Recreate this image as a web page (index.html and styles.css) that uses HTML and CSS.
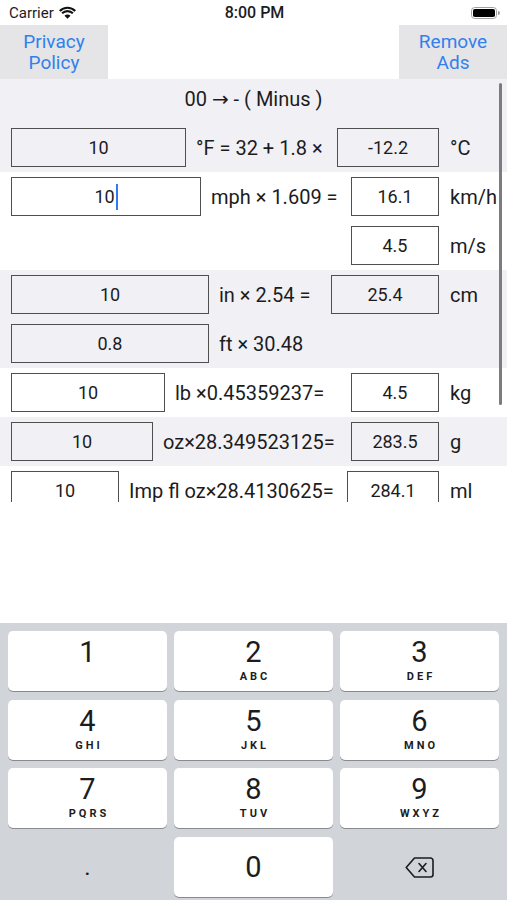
FILE: index.html
```html
<!DOCTYPE html>
<html lang="en">
<head>
  <meta charset="UTF-8" />
  <meta name="viewport" content="width=device-width, initial-scale=1.0" />
  <title>Unit Converter</title>
  <link rel="stylesheet" href="styles.css">
</head>
<body>
  <div id="statusBar">
    <div class="carrier">
      Carrier
      <svg class="wifi" viewBox="-1 0 20 14" width="19" height="14">
        <path d="M9 13 L5.82 9.82 A4.5 4.5 0 0 1 12.18 9.82 Z" fill="#111" />
        <path d="M3.34 7.34 A8 8 0 0 1 14.66 7.34" stroke="#111" stroke-width="2.3" fill="none" />
        <path d="M0.87 4.87 A11.5 11.5 0 0 1 17.13 4.87" stroke="#111" stroke-width="2.3" fill="none" />
      </svg>
    </div>
    <div class="time">8:00 PM</div>
    <div class="battery">
      <svg viewBox="0 0 29 12" width="29" height="12">
        <rect x="0.5" y="0.5" width="25" height="11" rx="3.2" fill="none" stroke="#a0a0a0" />
        <rect x="2" y="2" width="22" height="8" rx="1.8" fill="#000" />
        <path d="M27 4 a1.5 1.5 0 0 1 0 4 Z" fill="#a0a0a0" />
      </svg>
    </div>
  </div>

  <div id="topBar">
    <button class="top-btn">Privacy<br>Policy</button>
    <button class="top-btn">Remove<br>Ads</button>
  </div>

  <div id="converter">
    <div class="band gray">
      <div class="hint">00 <span class="arrow">→</span> - ( Minus )</div>
      <div class="row">
        <div class="box" style="width:175px">10</div>
        <span class="label">°F = 32 + 1.8 ×</span>
        <div class="box result" style="width:102px">-12.2</div>
        <span class="unit">°C</span>
      </div>
    </div>

    <div class="band">
      <div class="row">
        <div class="box" style="width:190px">10<span class="caret"></span></div>
        <span class="label">mph × 1.609 =</span>
        <div class="box result" style="width:88px">16.1</div>
        <span class="unit">km/h</span>
      </div>
      <div class="row">
        <div class="box result" style="width:88px">4.5</div>
        <span class="unit">m/s</span>
      </div>
    </div>

    <div class="band gray">
      <div class="row">
        <div class="box" style="width:198px">10</div>
        <span class="label">in × 2.54 =</span>
        <div class="box result" style="width:108px">25.4</div>
        <span class="unit">cm</span>
      </div>
      <div class="row">
        <div class="box" style="width:198px">0.8</div>
        <span class="label">ft × 30.48</span>
      </div>
    </div>

    <div class="band">
      <div class="row">
        <div class="box" style="width:154px">10</div>
        <span class="label">lb ×0.45359237=</span>
        <div class="box result" style="width:88px">4.5</div>
        <span class="unit">kg</span>
      </div>
    </div>

    <div class="band gray">
      <div class="row">
        <div class="box" style="width:142px">10</div>
        <span class="label">oz×28.349523125=</span>
        <div class="box result" style="width:88px">283.5</div>
        <span class="unit">g</span>
      </div>
    </div>

    <div class="band">
      <div class="row">
        <div class="box" style="width:108px">10</div>
        <span class="label">Imp fl oz×28.4130625=</span>
        <div class="box result" style="width:92px">284.1</div>
        <span class="unit">ml</span>
      </div>
    </div>

    <div class="scroll-indicator"></div>
  </div>

  <div id="spacer"></div>

  <div id="keypad">
    <div class="key"><span class="digit">1</span></div>
    <div class="key"><span class="digit">2</span><span class="letters">ABC</span></div>
    <div class="key"><span class="digit">3</span><span class="letters">DEF</span></div>
    <div class="key"><span class="digit">4</span><span class="letters">GHI</span></div>
    <div class="key"><span class="digit">5</span><span class="letters">JKL</span></div>
    <div class="key"><span class="digit">6</span><span class="letters">MNO</span></div>
    <div class="key"><span class="digit">7</span><span class="letters">PQRS</span></div>
    <div class="key"><span class="digit">8</span><span class="letters">TUV</span></div>
    <div class="key"><span class="digit">9</span><span class="letters">WXYZ</span></div>
    <div class="key plain"><span class="dot">.</span></div>
    <div class="key zero"><span class="digit">0</span></div>
    <div class="key plain">
      <svg viewBox="0 0 29 21" width="29" height="21">
        <path d="M9.5 1 H25.5 a2.5 2.5 0 0 1 2.5 2.5 V17.5 a2.5 2.5 0 0 1 -2.5 2.5 H9.5 L1.2 10.5 Z" fill="none" stroke="#1c1c1e" stroke-width="1.6" stroke-linejoin="round" />
        <path d="M14 6.5 L21 14.5 M21 6.5 L14 14.5" stroke="#1c1c1e" stroke-width="1.6" stroke-linecap="round" />
      </svg>
    </div>
  </div>
</body>
</html>
```

FILE: styles.css
```css
html, body {
  margin: 0;
  padding: 0;
  width: 507px;
  height: 900px;
  overflow: hidden;
  background: #fff;
  font-family: Roboto, 'Liberation Sans', sans-serif;
  color: #1c1c1e;
}
body {
  display: flex;
  flex-direction: column;
}
#statusBar {
  flex-shrink: 0;
  height: 25px;
  display: grid;
  grid-template-columns: 1fr auto 1fr;
  align-items: center;
  padding: 0 7px 0 9px;
  font-size: 15px;
}
.carrier {
  display: flex;
  align-items: center;
  gap: 4px;
}
.time {
  font-size: 16px;
  font-weight: 500;
}
.battery {
  display: flex;
  justify-content: flex-end;
}
#topBar {
  flex-shrink: 0;
  height: 54px;
  display: flex;
  justify-content: space-between;
}
.top-btn {
  width: 108px;
  height: 54px;
  border: none;
  padding: 0;
  background: #e5e5e7;
  color: #3180ec;
  font-family: inherit;
  font-size: 19px;
  line-height: 21px;
}
#converter {
  flex-shrink: 0;
  height: 423px;
  overflow: hidden;
  position: relative;
}
.band.gray {
  background: #f1f1f5;
}
.hint {
  height: 44px;
  line-height: 40px;
  text-align: center;
  font-size: 20px;
}
.arrow {
  font-family: 'DejaVu Sans', sans-serif;
  font-size: 20px;
}
.row {
  height: 49px;
  display: flex;
  align-items: center;
  padding-left: 11px;
}
.box {
  box-sizing: border-box;
  height: 39px;
  border: 1.5px solid #4f4f4f;
  display: flex;
  align-items: center;
  justify-content: center;
  font-size: 18px;
}
.caret {
  display: inline-block;
  width: 2px;
  height: 26px;
  margin-left: 1px;
  background: #3478f6;
}
.label {
  margin-left: 10px;
  font-size: 20px;
  white-space: nowrap;
}
.result {
  margin-left: auto;
}
.unit {
  box-sizing: border-box;
  width: 68px;
  padding-left: 11px;
  font-size: 20px;
}
.scroll-indicator {
  position: absolute;
  right: 5px;
  top: 4px;
  width: 3px;
  height: 322px;
  border-radius: 2px;
  background: #7c7c80;
}
#spacer {
  flex: 1;
}
#keypad {
  flex-shrink: 0;
  height: 277px;
  box-sizing: border-box;
  background: #d1d4d9;
  padding: 8px 8px 0;
  display: grid;
  grid-template-columns: repeat(3, 1fr);
  grid-auto-rows: 60px;
  column-gap: 7px;
  row-gap: 8.7px;
}
.key {
  background: #fff;
  border-radius: 5px;
  box-shadow: 0 1px 0 #898a8d;
  display: flex;
  flex-direction: column;
  align-items: center;
  padding-top: 6px;
  box-sizing: border-box;
}
.digit {
  font-size: 29px;
  line-height: 30px;
}
.letters {
  margin-top: 4px;
  font-size: 11px;
  line-height: 12px;
  font-weight: 700;
  letter-spacing: 3px;
  margin-right: -3px;
}
.key.zero {
  justify-content: center;
  padding-top: 0;
}
.key.plain {
  background: transparent;
  box-shadow: none;
  justify-content: center;
  padding-top: 0;
}
.dot {
  font-size: 24px;
  line-height: 24px;
}
```
